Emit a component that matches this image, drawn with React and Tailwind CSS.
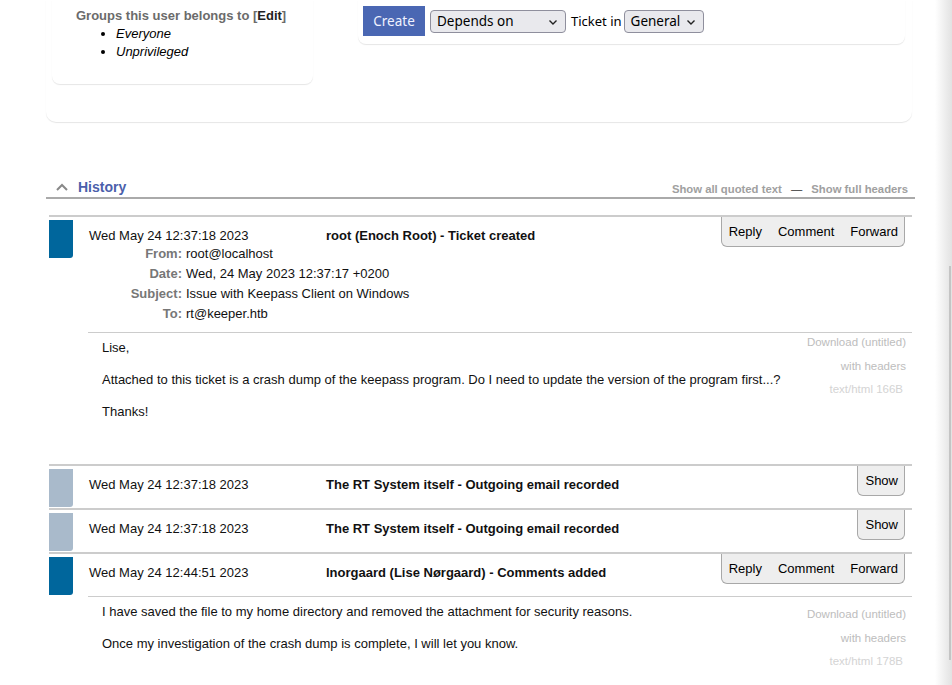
import React from 'react';

function ChevronDown() {
    return (
        <svg width="12" height="12" viewBox="0 0 12 12" fill="none" stroke="#222" strokeWidth="1.4">
            <path d="M2.5 4.5 L6 8 L9.5 4.5" />
        </svg>
    );
}

function FakeSelect({ label, width }) {
    return (
        <div className={`flex items-center justify-between h-[23px] px-[6px] bg-[#e9e9ed] border border-[#8f8f9d] rounded-[4px] text-[13.5px] text-black ${width}`}>
            <span>{label}</span>
            <ChevronDown />
        </div>
    );
}

function ActionButtons({ labels }) {
    return (
        <div className="flex items-center h-[30px] pl-[7px] pr-[6px] gap-[16px] bg-[#eee] border border-t-0 border-[#a8a8a8] rounded-b-[6px] text-[13px] text-black shrink-0">
            {labels.map(l => <span key={l}>{l}</span>)}
        </div>
    );
}

function Attachment({ size, top }) {
    return (
        <div className={`flex flex-col items-end pr-[6px] text-[11.5px] leading-[23.5px] ${top}`}>
            <span className="text-[#bdbdbd]">Download (untitled)</span>
            <span className="text-[#bdbdbd]">with headers</span>
            <span className="text-[#d4d4d4] pr-[3px]">text/html {size}</span>
        </div>
    );
}

function Transaction({ color, date, title, buttons, headers, body, size, attTop, bodyHeight }) {
    return (
        <div className="ml-[3px] w-[863px] border-t-2 border-[#ccc]">
            <div className="flex">
                <div className={`w-[24px] h-[38px] shrink-0 rounded-br-[3px] mt-[3px] ${color}`} />
                <div className="flex-1 ml-[15px]">
                    <div className={`min-h-[42px] ${headers ? 'pb-[8px]' : ''}`}>
                        <div className="flex items-start">
                            <div className="w-[238px] pl-[1px] pt-[11px] leading-[16px]">{date}</div>
                            <div className="flex-1 pt-[11px] leading-[16px] font-bold">{title}</div>
                            <div className="mr-[7px]">{buttons}</div>
                        </div>
                        {headers && (
                            <div className="grid grid-cols-[94px_1fr] gap-x-[4px] leading-[20px] -mt-[3px]">
                                {headers.map(([k, v]) => (
                                    <React.Fragment key={k}>
                                        <div className="text-right font-bold text-[#777]">{k}</div>
                                        <div>{v}</div>
                                    </React.Fragment>
                                ))}
                            </div>
                        )}
                    </div>
                    {body && (
                        <div className={`flex border-t border-[#ccc] ${bodyHeight}`}>
                            <div className="flex-1 pl-[14px] pt-[7px] leading-[16px]">
                                {body.map((p, i) => <p key={i} className="mb-[16px]">{p}</p>)}
                            </div>
                            <Attachment size={size} top={attTop} />
                        </div>
                    )}
                </div>
            </div>
        </div>
    );
}

export default function App() {
    return (
        <div className="flex w-[952px] h-[685px] overflow-hidden bg-white text-[13px] text-[#111] font-['Liberation_Sans',Arial,sans-serif]">
            <div className="w-[935px]">
                {/* top summary cards */}
                <div className="ml-[46px] w-[866px] h-[122px] rounded-b-[10px] shadow-[0_1px_1px_rgba(0,0,0,0.1)] flex items-start">
                    <div className="ml-[6px] w-[261px] h-[84px] rounded-b-[8px] shadow-[0_1px_1px_rgba(0,0,0,0.1)] pl-[24px] pt-[7px]">
                        <div className="font-bold text-[#6b6b6b] leading-[18px]">
                            Groups this user belongs to [<span className="text-[#222]">Edit</span>]
                        </div>
                        <ul className="list-disc pl-[40px] italic leading-[18px] text-black">
                            <li>Everyone</li>
                            <li>Unprivileged</li>
                        </ul>
                    </div>
                    <div className="ml-[45px] w-[547px] h-[44px] rounded-b-[8px] shadow-[0_1px_1px_rgba(0,0,0,0.1)] pl-[5px] pt-[6px] flex items-start gap-[5px] font-['Noto_Sans',sans-serif]">
                        <div className="h-[30px] w-[62px] flex items-center justify-center bg-[#4a67b3] text-[#f0f2ff] text-[13.5px]">Create</div>
                        <div className="pt-[4px] flex items-center text-[13px] text-black">
                            <FakeSelect label="Depends on" width="w-[136px]" />
                            <span className="ml-[5px] mr-[2px]">Ticket in</span>
                            <FakeSelect label="General" width="w-[80px]" />
                        </div>
                    </div>
                </div>

                {/* history header */}
                <div className="ml-[46px] w-[869px] mt-[56px] flex items-end justify-between border-b-2 border-[#aaa] pb-[1px]">
                    <div className="flex items-center">
                        <svg width="14" height="10" viewBox="0 0 14 10" className="ml-[9px] mr-[9px]" fill="none" stroke="#888" strokeWidth="2">
                            <path d="M2 8 L7 3 L12 8" />
                        </svg>
                        <span className="text-[14px] font-bold text-[#4b5fab] leading-[18px]">History</span>
                    </div>
                    <div className="text-[11.3px] font-bold text-[#a0a0a0] pr-[7px] leading-[14px]">
                        Show all quoted text <span className="text-[#333] mx-[6px] font-normal">—</span> Show full headers
                    </div>
                </div>

                <div className="mt-[16px] ml-[46px]">
                    <Transaction
                        color="bg-[#00669c]"
                        date="Wed May 24 12:37:18 2023"
                        title="root (Enoch Root) - Ticket created"
                        buttons={<ActionButtons labels={['Reply', 'Comment', 'Forward']} />}
                        headers={[
                            ['From:', 'root@localhost'],
                            ['Date:', 'Wed, 24 May 2023 12:37:17 +0200'],
                            ['Subject:', 'Issue with Keepass Client on Windows'],
                            ['To:', 'rt@keeper.htb'],
                        ]}
                        body={[
                            'Lise,',
                            'Attached to this ticket is a crash dump of the keepass program. Do I need to update the version of the program first...?',
                            'Thanks!',
                        ]}
                        size="166B"
                        attTop="-mt-[2px]"
                        bodyHeight="h-[132px]"
                    />
                    <Transaction
                        color="bg-[#a9bacb]"
                        date="Wed May 24 12:37:18 2023"
                        title="The RT System itself - Outgoing email recorded"
                        buttons={<ActionButtons labels={['Show']} />}
                    />
                    <Transaction
                        color="bg-[#a9bacb]"
                        date="Wed May 24 12:37:18 2023"
                        title="The RT System itself - Outgoing email recorded"
                        buttons={<ActionButtons labels={['Show']} />}
                    />
                    <Transaction
                        color="bg-[#00669c]"
                        date="Wed May 24 12:44:51 2023"
                        title="lnorgaard (Lise Nørgaard) - Comments added"
                        buttons={<ActionButtons labels={['Reply', 'Comment', 'Forward']} />}
                        body={[
                            'I have saved the file to my home directory and removed the attachment for security reasons.',
                            'Once my investigation of the crash dump is complete, I will let you know.',
                        ]}
                        size="178B"
                        attTop="pt-[6px]"
                        bodyHeight="h-[100px]"
                    />
                </div>
            </div>
            <div className="w-[17px] h-full bg-gradient-to-r from-white to-[#e2e2e2] flex flex-col items-end pt-[266px]">
                <div className="w-[2px] h-[394px] bg-[#c4c4c4] mr-[1px]" />
            </div>
        </div>
    );
}
